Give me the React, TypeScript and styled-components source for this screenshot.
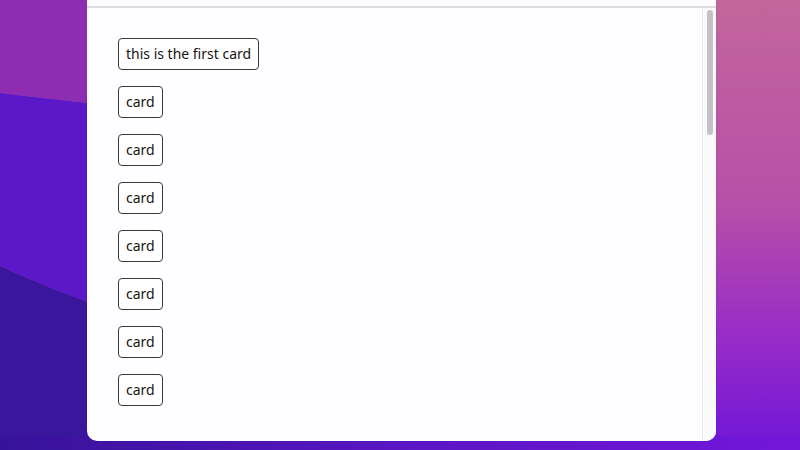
import React from "react";
import styled, { createGlobalStyle } from "styled-components";

const GlobalStyle = createGlobalStyle`
  html, body {
    margin: 0;
    padding: 0;
    overflow: hidden;
  }
  body {
    font-family: "Noto Sans", "Open Sans", sans-serif;
  }
`;

const Desktop = styled.div`
  position: relative;
  width: 800px;
  height: 450px;
  overflow: hidden;
  display: flex;
  align-items: flex-start;
`;

const Wallpaper = styled.svg`
  position: absolute;
  inset: 0;
  z-index: 0;
`;

const Window = styled.div`
  position: relative;
  z-index: 1;
  margin-left: 87px;
  width: 629px;
  height: 441px;
  background: #fefdff;
  border-radius: 0 0 10px 10px;
  overflow: hidden;
  display: flex;
  flex-direction: column;
  box-shadow: 0 0 1px rgba(0, 0, 0, 0.25);
`;

const TitleStrip = styled.div`
  height: 6px;
  flex-shrink: 0;
  border-bottom: 2px solid #dedcdf;
`;

const Body = styled.div`
  flex: 1;
  display: flex;
  min-height: 0;
`;

const ScrollArea = styled.div`
  flex: 1;
  overflow: hidden;
  padding: 30px 0 22px 31px;
`;

const CardList = styled.div`
  display: flex;
  flex-direction: column;
  align-items: flex-start;
  gap: 16px;
`;

const Card = styled.div`
  flex-shrink: 0;
  box-sizing: border-box;
  height: 32px;
  padding: 0 7px 1px;
  display: flex;
  align-items: center;
  border: 1px solid #3a3a3a;
  border-radius: 4px;
  font-size: 14px;
  color: #151515;
  background: #ffffff;
`;

const ScrollTrack = styled.div`
  width: 14px;
  flex-shrink: 0;
  box-sizing: border-box;
  background: #fafafa;
  border-left: 1px solid #ececec;
  padding: 2px 3px 0 4px;
`;

const ScrollThumb = styled.div`
  height: 125px;
  border-radius: 4px;
  background: #c3c2c6;
`;

const cards = ["this is the first card", ...Array.from({ length: 7 }, () => "card")];

export default function App() {
  return (
    <>
      <GlobalStyle />
      <Desktop>
        <Wallpaper width="800" height="450" viewBox="0 0 800 450">
          <defs>
            <linearGradient id="right" x1="0" y1="0" x2="0" y2="1">
              <stop offset="0" stopColor="#c4659c" />
              <stop offset="0.45" stopColor="#b650a8" />
              <stop offset="0.72" stopColor="#9c2ec4" />
              <stop offset="1" stopColor="#7016d8" />
            </linearGradient>
            <linearGradient id="bottom" x1="0" y1="0" x2="1" y2="0">
              <stop offset="0" stopColor="#361299" />
              <stop offset="0.5" stopColor="#5a16c4" />
              <stop offset="1" stopColor="#7416da" />
            </linearGradient>
          </defs>
          <rect x="0" y="0" width="800" height="450" fill="url(#right)" />
          <path d="M0 0 H400 V140 C260 120 160 112 0 93 Z" fill="#8e2cb4" />
          <path d="M0 93 C160 112 260 120 400 140 V360 C250 350 140 330 0 266 Z" fill="#5a18c8" />
          <path d="M0 266 C140 330 250 350 400 360 V450 H0 Z" fill="#3a169c" />
          <rect x="0" y="436" width="800" height="14" fill="url(#bottom)" />
        </Wallpaper>
        <Window>
          <TitleStrip />
          <Body>
            <ScrollArea>
              <CardList>
                {cards.map((text, i) => (
                  <Card key={i}>{text}</Card>
                ))}
              </CardList>
            </ScrollArea>
            <ScrollTrack>
              <ScrollThumb />
            </ScrollTrack>
          </Body>
        </Window>
      </Desktop>
    </>
  );
}
